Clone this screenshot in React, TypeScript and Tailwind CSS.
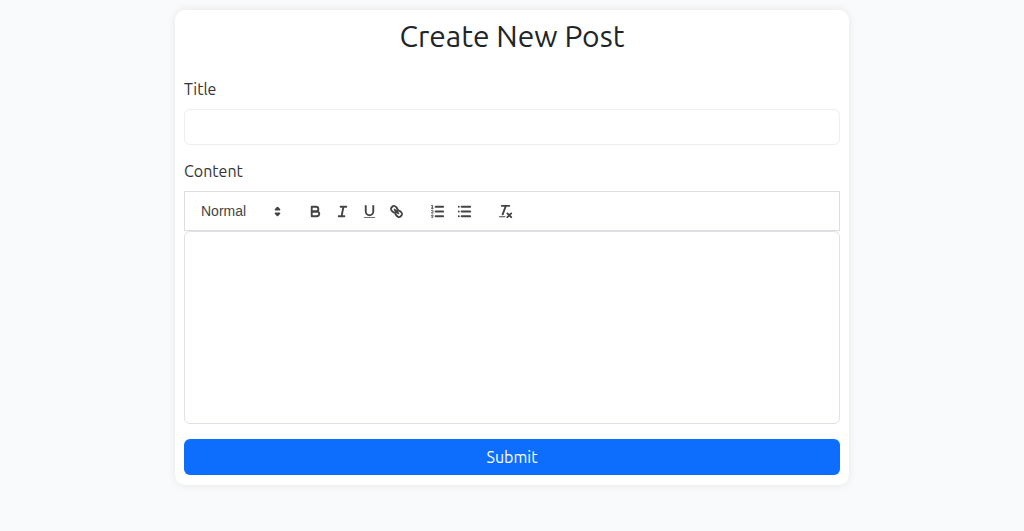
import type { ReactNode } from 'react'

function Icon({ children }: { children: ReactNode }) {
  return (
    <svg
      viewBox="0 0 18 18"
      className="size-[17px] fill-none stroke-[#444] stroke-2"
      strokeLinecap="round"
      strokeLinejoin="round"
      aria-hidden="true"
    >
      {children}
    </svg>
  )
}

function ToolButton({ label, children }: { label: string; children: ReactNode }) {
  return (
    <button type="button" aria-label={label} className="flex h-6 w-[27px] items-center justify-center">
      <Icon>{children}</Icon>
    </button>
  )
}

function Toolbar() {
  return (
    <div className="flex h-10 items-center gap-[14px] border border-[#dedede] px-2 font-['Liberation_Sans',sans-serif]">
      <div className="relative flex h-6 w-[95px] items-center">
        <select
          aria-label="Text style"
          defaultValue="Normal"
          className="h-6 w-full appearance-none bg-transparent pl-2 text-sm leading-6 text-[#444] outline-none"
        >
          <option>Normal</option>
          <option>Heading 1</option>
          <option>Heading 2</option>
        </select>
        <span className="pointer-events-none absolute right-0.5">
          <Icon>
            <polygon className="fill-[#444]" points="7 11 9 13 11 11 7 11" />
            <polygon className="fill-[#444]" points="7 7 9 5 11 7 7 7" />
          </Icon>
        </span>
      </div>
      <div className="flex">
        <ToolButton label="Bold">
          <path d="M5,4H9.5A2.5,2.5,0,0,1,12,6.5v0A2.5,2.5,0,0,1,9.5,9H5V4Z" />
          <path d="M5,9h5.5A2.5,2.5,0,0,1,13,11.5v0A2.5,2.5,0,0,1,10.5,14H5V9Z" />
        </ToolButton>
        <ToolButton label="Italic">
          <path d="M7,4H13M5,14H11M8,14L10,4" />
        </ToolButton>
        <ToolButton label="Underline">
          <path d="M5,3V9a4.012,4.012,0,0,0,4,4H9a4.012,4.012,0,0,0,4-4V3" />
          <rect className="fill-[#444] stroke-none" x="3" y="15" width="12" height="1" rx="0.5" />
        </ToolButton>
        <ToolButton label="Link">
          <path d="M7,7L11,11" />
          <path d="M8.9,4.577a3.476,3.476,0,0,1,.36,4.679A3.476,3.476,0,0,1,4.577,8.9C3.185,7.5,2.035,6.4,4.217,4.217S7.5,3.185,8.9,4.577Z" />
          <path d="M13.423,9.1a3.476,3.476,0,0,0-4.679-.36,3.476,3.476,0,0,0,.36,4.679c1.392,1.392,2.5,2.542,4.679.36S14.815,10.5,13.423,9.1Z" />
        </ToolButton>
      </div>
      <div className="flex">
        <ToolButton label="Numbered list">
          <path d="M7,4H15M7,9H15M7,14H15" />
          <path className="stroke-1" d="M2.5,5.5H4.5" />
          <path
            className="fill-[#444] stroke-none"
            d="M3.5,6A0.5,0.5,0,0,1,3,5.5V3.085l-0.276.138A0.5,0.5,0,0,1,2.053,3c-0.124-.247-0.023-0.324.224-0.447l1-.5A0.5,0.5,0,0,1,4,2.5v3A0.5,0.5,0,0,1,3.5,6Z"
          />
          <path className="stroke-1" d="M4.5,10.5h-2c0-.234,1.85-1.076,1.85-2.234A0.959,0.959,0,0,0,2.5,8.156" />
          <path
            className="stroke-1"
            d="M2.5,14.846a0.959,0.959,0,0,0,1.85-.109A0.7,0.7,0,0,0,3.75,14a0.688,0.688,0,0,0,.6-0.736,0.959,0.959,0,0,0-1.85-.109"
          />
        </ToolButton>
        <ToolButton label="Bulleted list">
          <path d="M6,4H15M6,9H15M6,14H15M3,4H3M3,9H3M3,14H3" />
        </ToolButton>
      </div>
      <ToolButton label="Clear formatting">
        <path d="M5,3H13M6,12L9.35,3M11,11L15,15M15,11L11,15" />
        <rect className="fill-[#444] stroke-none" x="2" y="14" width="7" height="1" rx="0.5" />
      </ToolButton>
    </div>
  )
}

export default function App() {
  return (
    <div className="min-h-screen bg-[#f8fafc] px-4 py-[10px] font-[Ubuntu,'Noto_Sans',sans-serif] text-[#212529]">
      <main className="mx-auto max-w-[674px] rounded-[10px] bg-white px-[9px] pb-[10px] shadow-[0_0_10px_rgba(0,0,0,0.08)]">
        <h1 className="pt-2 text-center text-[30px] leading-9">Create New Post</h1>
        <form className="pt-[23px]" onSubmit={(event) => event.preventDefault()}>
          <label htmlFor="title" className="block text-base leading-6 text-[#333]">
            Title
          </label>
          <input
            id="title"
            type="text"
            className="mt-2 block h-9 w-full rounded-md border border-[#eceeef] px-3 text-base outline-none"
          />
          <label htmlFor="content" className="mt-[14px] mb-2 block text-base leading-6 text-[#333]">
            Content
          </label>
          <Toolbar />
          <textarea
            id="content"
            className="block h-[193px] w-full resize-none rounded-md border border-[#dee2e6] px-3 py-2 text-base outline-none"
          />
          <button
            type="submit"
            className="mt-[15px] block h-9 w-full rounded-md bg-[#0d6efd] text-base leading-6 text-white"
          >
            Submit
          </button>
        </form>
      </main>
    </div>
  )
}
